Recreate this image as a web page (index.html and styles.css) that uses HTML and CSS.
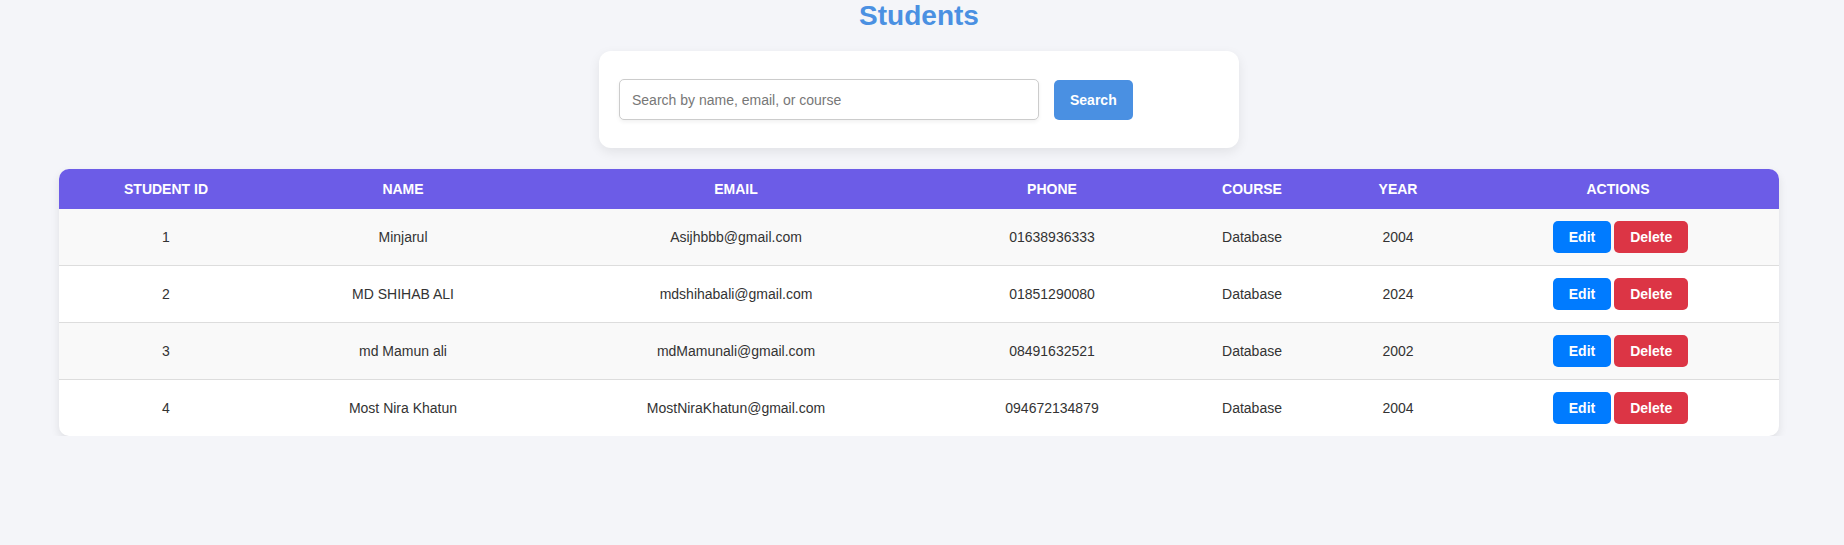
FILE: index.html
```html
<!DOCTYPE html>
<html lang="en">
<head>
<meta charset="utf-8">
<title>Students</title>
<link rel="stylesheet" href="styles.css">
</head>
<body>
  <h2 class="page-title">Students</h2>
  <div class="search-card">
    <form class="search-form">
      <input class="search-input" type="text" placeholder="Search by name, email, or course">
      <button class="btn btn-search" type="button">Search</button>
    </form>
  </div>
  <div class="table-wrap">
    <table class="students">
      <thead>
        <tr>
          <th class="c-id">Student ID</th>
          <th class="c-name">Name</th>
          <th class="c-email">Email</th>
          <th class="c-phone">Phone</th>
          <th class="c-course">Course</th>
          <th class="c-year">Year</th>
          <th class="c-actions">Actions</th>
        </tr>
      </thead>
      <tbody>
        <tr>
          <td>1</td><td>Minjarul</td><td>Asijhbbb@gmail.com</td><td>01638936333</td><td>Database</td><td>2004</td>
          <td class="cell-actions"><div class="actions"><button class="btn btn-edit" type="button">Edit</button><button class="btn btn-delete" type="button">Delete</button></div></td>
        </tr>
        <tr>
          <td>2</td><td>MD SHIHAB ALI</td><td>mdshihabali@gmail.com</td><td>01851290080</td><td>Database</td><td>2024</td>
          <td class="cell-actions"><div class="actions"><button class="btn btn-edit" type="button">Edit</button><button class="btn btn-delete" type="button">Delete</button></div></td>
        </tr>
        <tr>
          <td>3</td><td>md Mamun ali</td><td>mdMamunali@gmail.com</td><td>08491632521</td><td>Database</td><td>2002</td>
          <td class="cell-actions"><div class="actions"><button class="btn btn-edit" type="button">Edit</button><button class="btn btn-delete" type="button">Delete</button></div></td>
        </tr>
        <tr>
          <td>4</td><td>Most Nira Khatun</td><td>MostNiraKhatun@gmail.com</td><td>094672134879</td><td>Database</td><td>2004</td>
          <td class="cell-actions"><div class="actions"><button class="btn btn-edit" type="button">Edit</button><button class="btn btn-delete" type="button">Delete</button></div></td>
        </tr>
      </tbody>
    </table>
  </div>
</body>
</html>
```
FILE: styles.css
```css
* { box-sizing: border-box; }

body {
  margin: 0;
  padding-right: 6px;
  background: #f4f5f9;
  font-family: "Liberation Sans", Arial, sans-serif;
  color: #333;
}

.page-title {
  margin: 0 0 19px;
  text-align: center;
  font-size: 28px;
  font-weight: bold;
  line-height: normal;
  color: #4a90e2;
}

.search-card {
  width: 640px;
  margin: 0 auto 21px;
  padding: 28px 20px;
  background: #fff;
  border-radius: 12px;
  box-shadow: 0 4px 12px rgba(0, 0, 0, 0.08);
}

.search-form {
  display: flex;
  align-items: center;
  gap: 15px;
}

.search-input {
  width: 70%;
  height: 41px;
  padding: 0 12px;
  border: 1px solid #ccc;
  border-radius: 5px;
  font-family: inherit;
  font-size: 14px;
  color: #333;
  box-shadow: 0 2px 4px rgba(0, 0, 0, 0.06);
  outline: none;
}

.search-input::placeholder { color: #777; }

.btn {
  border: none;
  border-radius: 5px;
  font-family: inherit;
  font-size: 14px;
  font-weight: bold;
  line-height: 16px;
  color: #fff;
  cursor: pointer;
}

.btn-search {
  height: 40px;
  padding: 0 16px;
  background: #4a90e2;
}

.table-wrap {
  width: 1720px;
  margin: 0 auto;
  background: #fff;
  border-radius: 10px;
  overflow: hidden;
  box-shadow: 0 4px 10px rgba(0, 0, 0, 0.09);
}

.students {
  width: 100%;
  border-collapse: separate;
  border-spacing: 0;
  font-size: 14px;
}

.students th {
  padding: 12px;
  background: #6c5ce7;
  color: #fff;
  font-weight: bold;
  text-transform: uppercase;
  text-align: center;
  line-height: 16px;
}

.students td {
  padding: 12px;
  text-align: center;
  line-height: 16px;
  border-bottom: 1px solid #ddd;
}

.students td.cell-actions { padding: 12px 7px 12px 12px; }

.students tbody tr:nth-child(odd) td { background: #f9f9f9; }
.students tbody tr:last-child td { border-bottom: none; }

.c-id { width: 214px; }
.c-name { width: 260px; }
.c-email { width: 406px; }
.c-phone { width: 226px; }
.c-course { width: 174px; }
.c-year { width: 118px; }
.c-actions { width: 322px; }

.actions {
  display: flex;
  justify-content: center;
  gap: 3px;
}

.btn-edit,
.btn-delete {
  height: 32px;
  padding: 0 16px;
}

.btn-edit { background: #007bff; }
.btn-delete { background: #dc3545; }
```
